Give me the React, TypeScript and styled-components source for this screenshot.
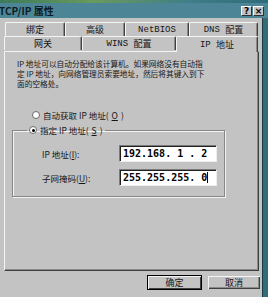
import { createGlobalStyle, styled } from 'styled-components'

const Global = createGlobalStyle`
    html, body {
        margin: 0;
        padding: 0;
        background: #c3c3c3;
    }
    body {
        font-family: "Noto Sans CJK SC", "DejaVu Sans", sans-serif;
        color: #161616;
    }
`

const Window = styled.div`
    width: 268px;
    height: 297px;
    overflow: hidden;
    display: flex;
    flex-direction: column;
    background: #c3c3c3;
`
const TopStrip = styled.div`
    height: 3px;
    background: linear-gradient(90deg, #3b7a5a, #6a9a5c 35%, #3f7f88 70%, #2f6a7a);
`
const TitleBar = styled.div`
    height: 15px;
    display: flex;
    align-items: center;
    justify-content: space-between;
    padding-right: 4px;
    background: #4c8595;
`
const TitleText = styled.span`
    font-size: 10px;
    font-weight: 700;
    color: #0d1c26;
    margin-left: -1px;
    white-space: nowrap;
`
const TitleButtons = styled.div`
    display: flex;
    gap: 1px;
`
const TitleButton = styled.span`
    width: 11px;
    height: 10px;
    box-sizing: border-box;
    display: flex;
    align-items: center;
    justify-content: center;
    font: 700 9px "DejaVu Sans", sans-serif;
    color: #000;
    background: #c3c3c3;
    border-top: 1px solid #fff;
    border-left: 1px solid #fff;
    border-right: 1px solid #303030;
    border-bottom: 1px solid #303030;
`
const Content = styled.div`
    flex: 1;
    display: flex;
`
const Main = styled.div`
    width: 262px;
    padding-top: 4px;
    display: flex;
    flex-direction: column;
`
const RightFrame = styled.div`
    flex: 1;
    border-left: 1px solid #1c3a42;
    background: #336b76;
`
const TabRow = styled.div<{ $offset: number }>`
    display: flex;
    margin-left: ${p => p.$offset}px;
`
const Tab = styled.div<{ $w: number; $active?: boolean }>`
    width: ${p => p.$w}px;
    height: ${p => (p.$active ? 16 : 14)}px;
    margin-bottom: ${p => (p.$active ? -1 : 0)}px;
    box-sizing: border-box;
    position: relative;
    z-index: ${p => (p.$active ? 1 : 0)};
    display: flex;
    align-items: center;
    justify-content: center;
    font-size: 9px;
    white-space: nowrap;
    background: #c3c3c3;
    border-top: 1px solid #f4f4f4;
    border-left: 1px solid #f4f4f4;
    border-right: 1px solid #404040;
    box-shadow: inset -1px 0 0 #8a8a8a;
    border-radius: 2px 2px 0 0;
`
const Mono = styled.span`
    font-family: "Liberation Mono", monospace;
    font-size: 9px;
`
const Panel = styled.div`
    margin-left: 4px;
    width: 255px;
    height: 220px;
    box-sizing: border-box;
    padding: 7px 0 0 12px;
    border-top: 1px solid #f4f4f4;
    border-left: 1px solid #f4f4f4;
    border-right: 1px solid #404040;
    border-bottom: 1px solid #404040;
    box-shadow: inset -1px -1px 0 #8a8a8a;
`
const Intro = styled.p`
    margin: 0;
    font-size: 7.7px;
    line-height: 10px;
    white-space: nowrap;
`
const RadioRow = styled.label`
    height: 10px;
    margin: 21px 0 0 15px;
    display: flex;
    align-items: center;
    gap: 3px;
    font-size: 8.5px;
    white-space: nowrap;
`
const Radio = styled.span<{ $on?: boolean }>`
    width: 8px;
    height: 8px;
    box-sizing: border-box;
    border-radius: 50%;
    background: #fff;
    border: 1px solid #6a6a6a;
    display: flex;
    align-items: center;
    justify-content: center;
    &::after {
        content: '';
        width: 3px;
        height: 3px;
        border-radius: 50%;
        background: ${p => (p.$on ? '#000' : 'transparent')};
    }
`
const Key = styled.span`
    text-decoration: underline;
`
const Group = styled.fieldset`
    margin: 5px 0 0 -5px;
    width: 213px;
    box-sizing: border-box;
    padding: 10px 0 10px 0;
    border: 1px solid #858585;
    box-shadow: inset 1px 1px 0 #f4f4f4, 1px 1px 0 #f4f4f4;
`
const Legend = styled.legend`
    margin-left: 14px;
    padding: 0 2px;
    height: 10px;
    display: flex;
    align-items: center;
    gap: 3px;
    font-size: 8.5px;
    white-space: nowrap;
`
const Fields = styled.div`
    padding-left: 29px;
    display: flex;
    flex-direction: column;
    gap: 7px;
`
const FieldRow = styled.div`
    display: flex;
    align-items: center;
`
const FieldLabel = styled.span`
    width: 77px;
    font-size: 8.5px;
    white-space: nowrap;
`
const Field = styled.div`
    width: 98px;
    height: 17px;
    box-sizing: border-box;
    display: flex;
    align-items: center;
    padding-left: 3px;
    background: #fff;
    border-top: 1px solid #7a7a7a;
    border-left: 1px solid #7a7a7a;
    border-right: 1px solid #efefef;
    border-bottom: 1px solid #efefef;
    box-shadow: inset 1px 1px 0 #202020;
    font: 700 10px "DejaVu Sans Mono", monospace;
    white-space: pre;
    color: #000;
`
const Caret = styled.span`
    width: 1px;
    height: 11px;
    background: #000;
`
const Buttons = styled.div`
    display: flex;
    justify-content: flex-end;
    gap: 5px;
    margin: 4px 1px 0 0;
`
const Button = styled.div<{ $default?: boolean; $w: number }>`
    width: ${p => p.$w}px;
    height: 15px;
    box-sizing: border-box;
    display: flex;
    align-items: center;
    justify-content: center;
    font-size: 9px;
    background: #c3c3c3;
    border: 1px solid ${p => (p.$default ? '#000' : 'transparent')};
    box-shadow: ${p => p.$default
        ? 'inset 1px 1px 0 #f4f4f4, inset -1px -1px 0 #404040'
        : 'inset 1px 1px 0 #f4f4f4, inset -1px -1px 0 #404040, inset -2px -2px 0 #8a8a8a'};
`

export default function App() {
    return (
        <Window>
            <Global />
            <TopStrip />
            <TitleBar>
                <TitleText>TCP/IP 属性</TitleText>
                <TitleButtons>
                    <TitleButton>?</TitleButton>
                    <TitleButton>×</TitleButton>
                </TitleButtons>
            </TitleBar>
            <Content>
                <Main>
                    <TabRow $offset={5}>
                        <Tab $w={60}>绑定</Tab>
                        <Tab $w={60}>高级</Tab>
                        <Tab $w={64}><Mono>NetBIOS</Mono></Tab>
                        <Tab $w={69}><Mono>DNS&nbsp;</Mono>配置</Tab>
                    </TabRow>
                    <TabRow $offset={4}>
                        <Tab $w={78}>网关</Tab>
                        <Tab $w={94}><Mono>WINS&nbsp;</Mono>配置</Tab>
                        <Tab $w={82} $active><Mono>IP&nbsp;</Mono>地址</Tab>
                    </TabRow>
                    <Panel>
                        <Intro>
                            IP 地址可以自动分配给该计算机。如果网络没有自动指<br />
                            定 IP 地址，向网络管理员索要地址，然后将其键入到下<br />
                            面的空格处。
                        </Intro>
                        <RadioRow>
                            <Radio />
                            自动获取 IP 地址(<Key>O</Key>)
                        </RadioRow>
                        <Group>
                            <Legend>
                                <Radio $on />
                                指定 IP 地址(<Key>S</Key>)
                            </Legend>
                            <Fields>
                                <FieldRow>
                                    <FieldLabel>IP 地址(<Key>I</Key>):</FieldLabel>
                                    <Field>192.168. 1 . 2</Field>
                                </FieldRow>
                                <FieldRow>
                                    <FieldLabel>子网掩码(<Key>U</Key>):</FieldLabel>
                                    <Field>255.255.255. 0<Caret /></Field>
                                </FieldRow>
                            </Fields>
                        </Group>
                    </Panel>
                    <Buttons>
                        <Button $default $w={55}>确定</Button>
                        <Button $w={54}>取消</Button>
                    </Buttons>
                </Main>
                <RightFrame />
            </Content>
        </Window>
    )
}
